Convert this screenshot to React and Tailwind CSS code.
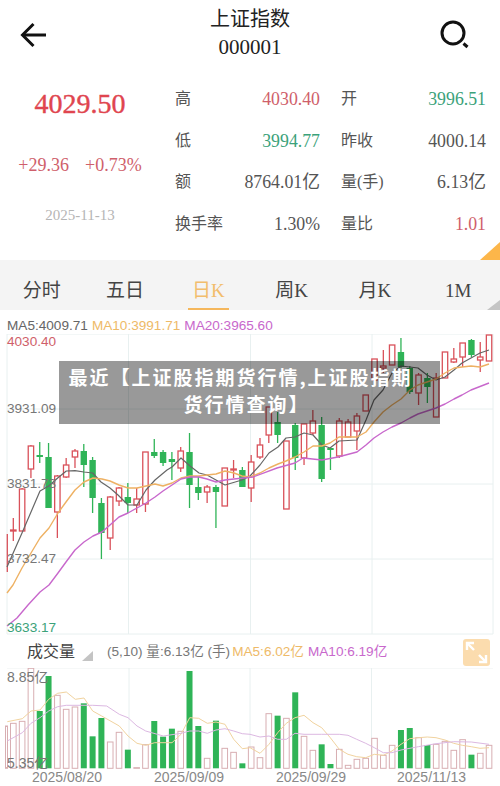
const RED = "#d9515a";
const GREEN = "#2fb457";
const xOf = (i) => 4.5 + 8.81 * i;

// hi, lo, bodyTop, bodyBottom, colour
const candles = [
  [534, 572, 534, 572, "r"], [518, 541, 530, 531, "r"], [488, 531, 489, 531, "r"], [445, 478, 446, 469, "r"],
  [442, 463, 455, 457, "g"], [443, 508, 457, 508, "g"], [475, 538, 476, 512, "r"], [458, 478, 465, 477, "r"],
  [449, 468, 451, 457, "r"], [444, 487, 451, 465, "g"], [457, 513, 460, 498, "g"], [498, 559, 503, 533, "g"],
  [496, 550, 497, 538, "r"], [487, 506, 488, 501, "r"], [483, 513, 497, 503, "g"], [488, 513, 499, 505, "r"],
  [452, 512, 452, 504, "r"], [439, 458, 452, 456, "g"], [450, 466, 452, 463, "g"], [452, 480, 459, 462, "g"],
  [447, 472, 451, 468, "r"], [433, 508, 452, 485, "g"], [477, 500, 487, 493, "g"], [485, 503, 487, 492, "r"],
  [485, 528, 487, 492, "g"], [468, 506, 468, 506, "r"], [460, 478, 469, 470, "r"], [467, 487, 470, 487, "g"],
  [455, 502, 462, 488, "r"], [438, 459, 445, 457, "r"], [407, 443, 407, 435, "r"], [412, 443, 422, 435, "g"],
  [441, 509, 441, 509, "r"], [423, 470, 425, 458, "g"], [424, 465, 424, 458, "r"], [410, 435, 421, 433, "r"],
  [417, 482, 425, 479, "g"], [448, 470, 448, 450, "g"], [418, 458, 421, 456, "r"], [419, 437, 422, 437, "r"],
  [413, 450, 416, 431, "r"], [395, 411, 395, 411, "r"], [359, 380, 359, 380, "r"], [350, 373, 366, 368, "r"],
  [345, 365, 345, 365, "r"], [338, 368, 352, 367, "g"], [366, 394, 368, 392, "g"], [373, 405, 375, 393, "r"],
  [373, 403, 378, 387, "g"], [373, 417, 378, 417, "r"], [352, 378, 352, 378, "r"], [348, 363, 359, 362, "r"],
  [343, 367, 343, 357, "r"], [339, 357, 340, 355, "g"], [342, 372, 357, 360, "r"], [335, 361, 335, 361, "r"],
];

const ma5 = "7,567 22,533 40,491 48.7,486 57.7,478 66.3,471 75,470.7 84,472 92.7,473 101,482 110,488 118,495 128,505 137,505 146,490 155,480 167,470 172,467 181,458 190,466 199,473 207,475 225,485 242,480 250,476 260,465 269,453 278,447 286,438 295,437 304,433 313,435 322,445 330,448 339,441 357,440 366,420 374,400 383,390 392,373 401,366 410,367 418,368 427,375 436,380 445,377 454,370 462,363 471,358 480,353 489,350";
const ma10 = "7,593 13,585 22,568 31,553 40,538 49,528 58,513 66,502 75,490 84,482 93,478 102,479 110,481 119,485 128,488 137,488 146,486 155,484 163,486 172,483 181,478 190,476 199,476 207,475 216,474 225,471 234,473 242,476 250,477 260,473 269,468 278,464 286,461 295,457 304,452 313,446 322,446 330,443 339,437 357,437 366,432 374,422 383,412 392,405 401,399 410,390 418,385 427,382 436,379 445,373 454,368 462,367 471,366 480,367 489,364";
const ma20 = "7,626 17,618 28,605 40,592 49,585 58,573 66,562 75,550 84,542 93,536 102,532 110,525 119,517 128,513 137,508 146,503 155,497 163,491 172,485 181,479 190,477 199,477 207,479 216,482 225,480 234,479 253,477 277,468 295,463 303,458 322,460 338,457 357,452 366,445 374,438 383,432 392,427 401,423 410,418 418,414 436,408 445,404 454,399 462,395 471,390 489,383";

const volTops = [
  [270, "r"], [262, "r"], [256, "r"], [97, "r"], [225, "g"], [120, "g"], [178, "r"], [220, "r"], [213, "r"], [202, "g"],
  [301, "g"], [246, "g"], [318, "r"], [289, "r"], [341, "g"], [395, "r"], [326, "r"], [255, "g"], [302, "g"], [278, "g"],
  [286, "r"], [105, "g"], [270, "g"], [367, "r"], [254, "g"], [337, "r"], [349, "r"], [382, "g"], [333, "r"], [365, "r"],
  [233, "r"], [239, "g"], [247, "r"], [169, "g"], [301, "r"], [343, "r"], [325, "g"], [384, "g"], [340, "r"], [388, "r"],
  [370, "r"], [367, "r"], [307, "r"], [358, "r"], [328, "r"], [282, "g"], [276, "g"], [305, "r"], [327, "g"], [325, "r"],
  [316, "r"], [343, "r"], [311, "r"], [356, "g"], [352, "r"], [328, "r"],
];

const zoomPts = (pts) => pts.map(([x, z]) => `${(x / 3).toFixed(1)},${(636 + z / 3).toFixed(1)}`).join(" ");

const volMa5 = zoomPts([[22,257],[67,248],[93,225],[120,222],[146,190],[173,172],[199,168],[226,190],[252,186],[278,225],[305,240],[358,270],[384,300],[411,322],[437,328],[464,320],[516,320],[543,295],[569,245],[596,247],[622,262],[648,258],[675,265],[701,310],[727,338],[750,335],[780,352],[807,325],[833,290],[859,262],[885,245],[912,238],[939,260],[965,275],[991,305],[1018,340],[1044,355],[1070,362],[1097,365],[1123,355],[1150,358],[1176,345],[1203,325],[1229,308],[1255,305],[1282,303],[1308,305],[1335,312],[1361,322],[1387,328],[1414,332],[1440,337],[1467,335]]);
const volMa10 = zoomPts([[22,315],[67,290],[93,262],[120,245],[146,225],[173,212],[199,208],[252,208],[278,208],[320,210],[358,235],[384,245],[411,270],[437,285],[490,300],[543,292],[569,285],[596,285],[622,292],[648,282],[675,278],[701,285],[727,293],[750,295],[780,303],[807,300],[833,310],[859,310],[885,292],[912,295],[965,295],[1018,295],[1044,298],[1070,310],[1097,322],[1123,335],[1150,350],[1176,350],[1203,342],[1255,332],[1308,323],[1361,317],[1414,318],[1467,325]]);

const stats = [
  ["高", "4030.40", "text-[#cf5f6b]", "开", "3996.51", "text-[#3ba27a]"],
  ["低", "3994.77", "text-[#3ba27a]", "昨收", "4000.14", "text-[#555555]"],
  ["额", "8764.01亿", "text-[#555555]", "量(手)", "6.13亿", "text-[#555555]"],
  ["换手率", "1.30%", "text-[#555555]", "量比", "1.01", "text-[#cf5f6b]"],
];

const tabs = ["分时", "五日", "日K", "周K", "月K", "1M"];
const serif = "font-['Liberation_Serif','Noto_Sans_CJK_SC',serif]";

function Row({ label, value, cls }) {
  return (
    <div className="flex h-[24px] items-center justify-between overflow-visible">
      <span className="text-[16px] leading-[24px] text-[#555555]">{label}</span>
      <span className={`text-[17.8px] leading-[24px] ${cls}`}>{value}</span>
    </div>
  );
}

function MainChart() {
  return (
    <svg className="block w-[500px] h-[301px]" viewBox="0 334 500 301">
      {[334, 409, 484, 559, 634].map((y) => (
        <line key={y} x1="7" x2="493" y1={y} y2={y} stroke="#e8f0f0" />
      ))}
      {[7, 128.5, 250.5, 372, 493].map((x) => (
        <line key={x} x1={x} x2={x} y1="334" y2="634" stroke="#e8f0f0" />
      ))}
      {candles.map(([hi, lo, top, bot, c], i) => {
        const x = i === 0 ? 7.3 : xOf(i);
        const col = c === "r" ? RED : GREEN;
        return (
          <g key={i}>
            <line x1={x} x2={x} y1={hi} y2={lo} stroke={col} strokeWidth="1.3" />
            {i > 0 &&
              (c === "r" ? (
                <rect x={x - 2.7} y={top} width="5.4" height={Math.max(bot - top, 1)} fill="#fff" stroke={col} strokeWidth="1.3" />
              ) : (
                <rect x={x - 3.2} y={top} width="6.4" height={Math.max(bot - top, 1.5)} fill={col} />
              ))}
          </g>
        );
      })}
      <polyline points={ma5} fill="none" stroke="#666666" strokeWidth="1.2" strokeLinejoin="round" />
      <polyline points={ma10} fill="none" stroke="#eeb163" strokeWidth="1.4" strokeLinejoin="round" />
      <polyline points={ma20} fill="none" stroke="#c868cc" strokeWidth="1.4" strokeLinejoin="round" />
    </svg>
  );
}

function VolChart() {
  return (
    <svg className="block w-[500px] h-[101px]" viewBox="0 668 500 101">
      <line x1="7" x2="493" y1="668" y2="668" stroke="#eef2f2" />
      {[129, 250, 371.5].map((x) => (
        <line key={x} x1={x} x2={x} y1="668" y2="768" stroke="#e8f0f0" />
      ))}
      {volTops.map(([z, c], i) => {
        const x = i === 0 ? 6 : xOf(i);
        const top = 636 + z / 3;
        return c === "r" ? (
          <rect key={i} x={i === 0 ? 5.5 : x - 2.8} y={top} width={i === 0 ? 2 : 5.6} height={768.3 - top} fill="#fff" stroke="#d8aeb2" strokeWidth="1" />
        ) : (
          <rect key={i} x={x - 3} y={top} width="6" height={768.3 - top} fill={GREEN} />
        );
      })}
      <polyline points={volMa5} fill="none" stroke="#f1d39f" strokeWidth="1" strokeLinejoin="round" />
      <polyline points={volMa10} fill="none" stroke="#dcb8e2" strokeWidth="1" strokeLinejoin="round" />
    </svg>
  );
}

export default function App() {
  return (
    <div className={`relative w-[500px] h-[786px] overflow-hidden bg-white ${serif}`}>
      {/* Header */}
      <header className="flex h-[78px] items-start">
        <div className="w-[100px] pl-[20px] pt-[22px]">
          <svg width="28" height="26" viewBox="20 21 28 26" fill="none" stroke="#111111" strokeWidth="3">
            <path d="M46 34H23" />
            <path d="M33.5 23L22.5 34L33.5 45" />
          </svg>
        </div>
        <div className="flex-1 pt-[5px] text-center text-[#222222] leading-[28px]">
          <div className="h-[28px] text-[20px]">上证指数</div>
          <div className="h-[28px] text-[21px]">000001</div>
        </div>
        <div className="flex w-[100px] justify-end pr-[30px] pt-[19px]">
          <svg width="30" height="30" viewBox="440 19 30 30" fill="none" stroke="#111111">
            <circle cx="453" cy="33" r="11" strokeWidth="3" />
            <path d="M463.5 43.5L467.5 47" strokeWidth="3" />
          </svg>
        </div>
      </header>

      {/* Quote */}
      <section className="relative flex h-[182px]">
        <div className="w-[160px] text-center">
          <div className="mt-[10px] text-[28px] leading-[32px] text-[#e0454f] [-webkit-text-stroke:0.4px_#e0454f]">4029.50</div>
          <div className="mt-[33px] flex justify-center gap-[16px] text-[18px] leading-[24px] text-[#cf5f6b]">
            <span>+29.36</span>
            <span>+0.73%</span>
          </div>
          <div className="mt-[28px] text-[15px] leading-[20px] text-[#b5b5b5]">2025-11-13</div>
        </div>
        <div className="ml-[15px] grid h-fit w-[311px] grid-cols-[145px_145px] gap-x-[21px] gap-y-[17.6px] pt-[9px]">
          {stats.map(([l1, v1, c1, l2, v2, c2]) => (
            <div key={l1} className="contents">
              <Row label={l1} value={v1} cls={c1} />
              <Row label={l2} value={v2} cls={c2} />
            </div>
          ))}
        </div>
        <svg className="absolute right-0 bottom-0" width="20" height="18" viewBox="0 0 20 18">
          <path d="M20 0V18H0Z" fill="#fcb64a" />
        </svg>
      </section>

      {/* Tabs */}
      <nav className="relative flex h-[50px] bg-[#f4f4f4]">
        {tabs.map((t) => (
          <div key={t} className={`relative flex flex-1 items-center justify-center pt-[12px] text-[19px] ${t === "日K" ? "text-[#f2bd6c]" : "text-[#444444]"}`}>
            {t}
            {t === "日K" && <span className="absolute bottom-0 left-[21px] h-[2px] w-[41px] bg-[#f5b75c]" />}
          </div>
        ))}
        <svg className="absolute right-0 bottom-0" width="13" height="10" viewBox="0 0 13 10">
          <path d="M13 0V10H0Z" fill="#c4c4c4" />
        </svg>
      </nav>

      {/* Main chart */}
      <section className="font-['Liberation_Sans','Noto_Sans_CJK_SC',sans-serif]">
        <div className="flex h-[24px] items-end gap-[4px] pl-[7px] text-[13.6px] leading-[16px]">
          <span className="text-[#666666]">MA5:4009.71</span>
          <span className="text-[#eeba68]">MA10:3991.71</span>
          <span className="text-[#c868cc]">MA20:3965.60</span>
        </div>
        <div className="relative">
          <MainChart />
          <span className="absolute left-[7px] top-[-1px] text-[13.6px] leading-[18px] text-[#cf5f6b]">4030.40</span>
          <span className="absolute left-[7px] top-[66px] text-[13.6px] leading-[18px] text-[#777777]">3931.09</span>
          <span className="absolute left-[7px] top-[141px] text-[13.6px] leading-[18px] text-[#777777]">3831.73</span>
          <span className="absolute left-[7px] top-[216px] text-[13.6px] leading-[18px] text-[#777777]">3732.47</span>
          <span className="absolute left-[7px] top-[285px] text-[13.6px] leading-[18px] text-[#3ba27a]">3633.17</span>
        </div>

        {/* Volume */}
        <div className="flex h-[33px] items-center pt-[1px]">
          <span className="ml-[27px] text-[16px] text-[#444444]">成交量</span>
          <svg className="ml-[7px] mt-[8px]" width="11" height="10" viewBox="0 0 11 10">
            <path d="M11 0V10H0Z" fill="#c4c4c4" />
          </svg>
          <span className="ml-[14px] text-[13.6px] text-[#777777]">(5,10) 量:6.13亿 (手)</span>
          <span className="ml-[2px] text-[13.6px] text-[#eeba68]">MA5:6.02亿</span>
          <span className="ml-[4px] text-[13.6px] text-[#c868cc]">MA10:6.19亿</span>
          <div className="ml-auto mr-[10px] flex h-[27px] w-[27px] items-center justify-center rounded-[3px] bg-[#fbdcae]">
            <svg width="25" height="25" viewBox="0 0 25 25" fill="none" stroke="#ffffff" strokeWidth="2.4">
              <path d="M3 10V3H10" />
              <path d="M3 3L10 10" />
              <path d="M22 15V22H15" />
              <path d="M22 22L15 15" />
            </svg>
          </div>
        </div>
        <div className="relative">
          <VolChart />
          <span className="absolute left-[7px] top-[0px] text-[14px] leading-[18px] text-[#777777]">8.85亿</span>
          <span className="absolute left-[7px] top-[86px] text-[14px] leading-[18px] text-[#777777]">5.35亿</span>
        </div>
        <div className="flex h-[17px] items-center text-[14px] leading-[17px] text-[#888888]">
          <span className="ml-[32px] w-[122px]">2025/08/20</span>
          <span className="w-[122px]">2025/09/09</span>
          <span className="w-[121px]">2025/09/29</span>
          <span>2025/11/13</span>
        </div>
      </section>

      {/* Title overlay */}
      <div className="absolute left-[59px] top-[361px] flex h-[63px] w-[381px] flex-col items-center justify-center bg-black/40 pr-[18px] pb-[5px] font-['Noto_Sans_CJK_SC','Liberation_Sans',sans-serif] text-[19px] font-bold tracking-[2px] text-white">
        <div className="h-[27px] leading-[27px]">最近【上证股指期货行情,上证股指期</div>
        <div className="h-[27px] pl-[12px] leading-[27px]">货行情查询】</div>
      </div>
    </div>
  );
}
